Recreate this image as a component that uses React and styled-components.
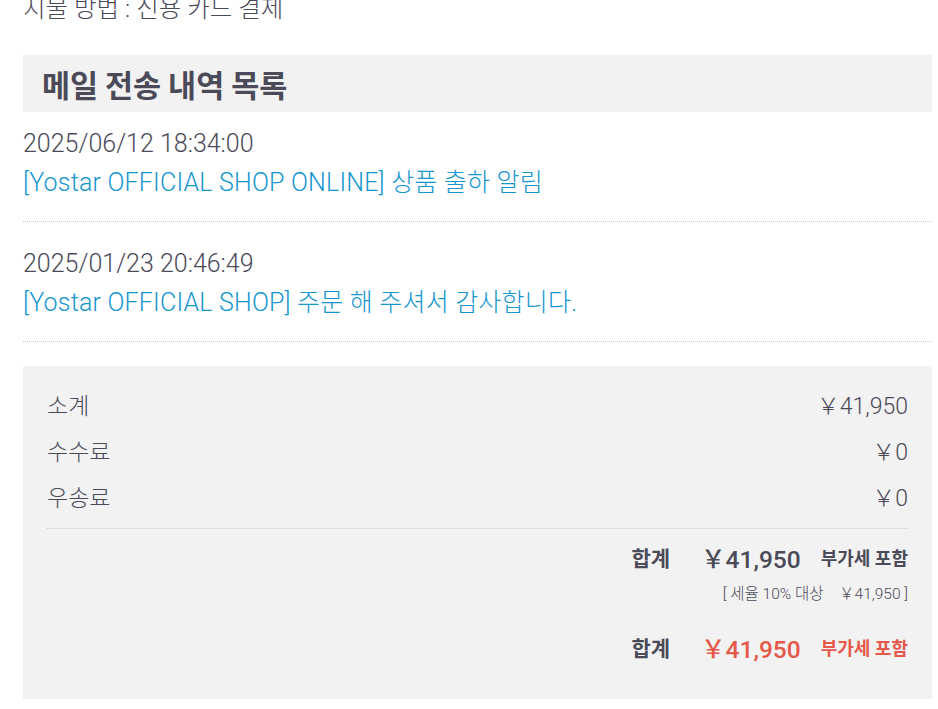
import styled, { createGlobalStyle } from "styled-components";

const GlobalStyle = createGlobalStyle`
  html, body {
    margin: 0;
    padding: 0;
    background: #fff;
    overflow: hidden;
  }
  body {
    font-family: Roboto, "Noto Sans CJK KR", "Noto Sans", sans-serif;
    font-weight: 300;
    color: #4a4a58;
  }
`;

const mails = [
  {
    id: 1,
    date: "2025/06/12 18:34:00",
    title: "[Yostar OFFICIAL SHOP ONLINE] 상품 출하 알림",
  },
  {
    id: 2,
    date: "2025/01/23 20:46:49",
    title: "[Yostar OFFICIAL SHOP] 주문 해 주셔서 감사합니다.",
  },
];

const fees = [
  { id: 1, label: "소계", value: "￥41,950" },
  { id: 2, label: "수수료", value: "￥0" },
  { id: 3, label: "우송료", value: "￥0" },
];

const Page = styled.div`
  margin: 0 6px 0 23px;
  height: 709px;
`;
const PayLine = styled.div`
  margin-top: -8px;
  font-size: 24.5px;
  line-height: 34px;
  height: 34px;
`;
const SectionTitle = styled.h2`
  margin: 29px 0 0;
  height: 57px;
  padding-left: 19px;
  display: flex;
  align-items: center;
  background: #f2f2f2;
  font-family: "Noto Sans CJK KR", sans-serif;
  font-size: 30.5px;
  font-weight: 700;
  color: #4a4a58;
`;
const MailList = styled.ul`
  list-style: none;
  margin: 0;
  padding: 0;
`;
const MailItem = styled.li`
  padding: 22px 0 19px;
  border-bottom: 1px dotted #c8c8c8;
  &:first-child {
    padding-top: 12px;
  }
`;
const MailDate = styled.div`
  font-size: 25px;
  line-height: 39px;
  height: 39px;
`;
const MailLink = styled.a`
  display: block;
  font-size: 25px;
  letter-spacing: 0.2px;
  line-height: 39px;
  height: 39px;
  color: #1496d0;
  text-decoration: none;
`;
const SummaryBox = styled.div`
  margin-top: 24px;
  background: #f2f2f2;
  padding: 15px 24px 33px;
`;
const FeeList = styled.div`
  padding-bottom: 9px;
  border-bottom: 1px dotted #c8c8c8;
`;
const FeeRow = styled.div`
  display: flex;
  justify-content: space-between;
  align-items: center;
  height: 46px;
  font-size: 23px;
`;
const TotalRow = styled.div`
  display: flex;
  justify-content: flex-end;
  align-items: center;
  height: 38px;
  margin-top: ${({ $first }) => ($first ? "9px" : "24px")};
  color: ${({ $accent }) => ($accent ? "#e5584a" : "#4a4a58")};
`;
const TotalLabel = styled.span`
  font-size: 21px;
  font-weight: 700;
  color: #4a4a58;
  margin-right: 31px;
`;
const TotalAmount = styled.span`
  font-size: 24.5px;
  font-weight: 500;
  margin-right: 20px;
`;
const TaxIncluded = styled.span`
  font-size: 18px;
  font-weight: 700;
`;
const TaxNote = styled.div`
  margin-top: 8px;
  height: 20px;
  line-height: 20px;
  text-align: right;
  font-size: 15.5px;
`;

export default () => {
  return (
    <Page>
      <GlobalStyle />
      <PayLine>지불 방법 : 신용 카드 결제</PayLine>
      <SectionTitle>메일 전송 내역 목록</SectionTitle>
      <MailList>
        {mails.map((mail) => (
          <MailItem key={mail.id}>
            <MailDate>{mail.date}</MailDate>
            <MailLink href="#">{mail.title}</MailLink>
          </MailItem>
        ))}
      </MailList>
      <SummaryBox>
        <FeeList>
          {fees.map((fee) => (
            <FeeRow key={fee.id}>
              <span>{fee.label}</span>
              <span>{fee.value}</span>
            </FeeRow>
          ))}
        </FeeList>
        <TotalRow $first>
          <TotalLabel>합계</TotalLabel>
          <TotalAmount>￥41,950</TotalAmount>
          <TaxIncluded>부가세 포함</TaxIncluded>
        </TotalRow>
        <TaxNote>[ 세율 10% 대상　￥41,950 ]</TaxNote>
        <TotalRow $accent>
          <TotalLabel>합계</TotalLabel>
          <TotalAmount>￥41,950</TotalAmount>
          <TaxIncluded>부가세 포함</TaxIncluded>
        </TotalRow>
      </SummaryBox>
    </Page>
  );
};
